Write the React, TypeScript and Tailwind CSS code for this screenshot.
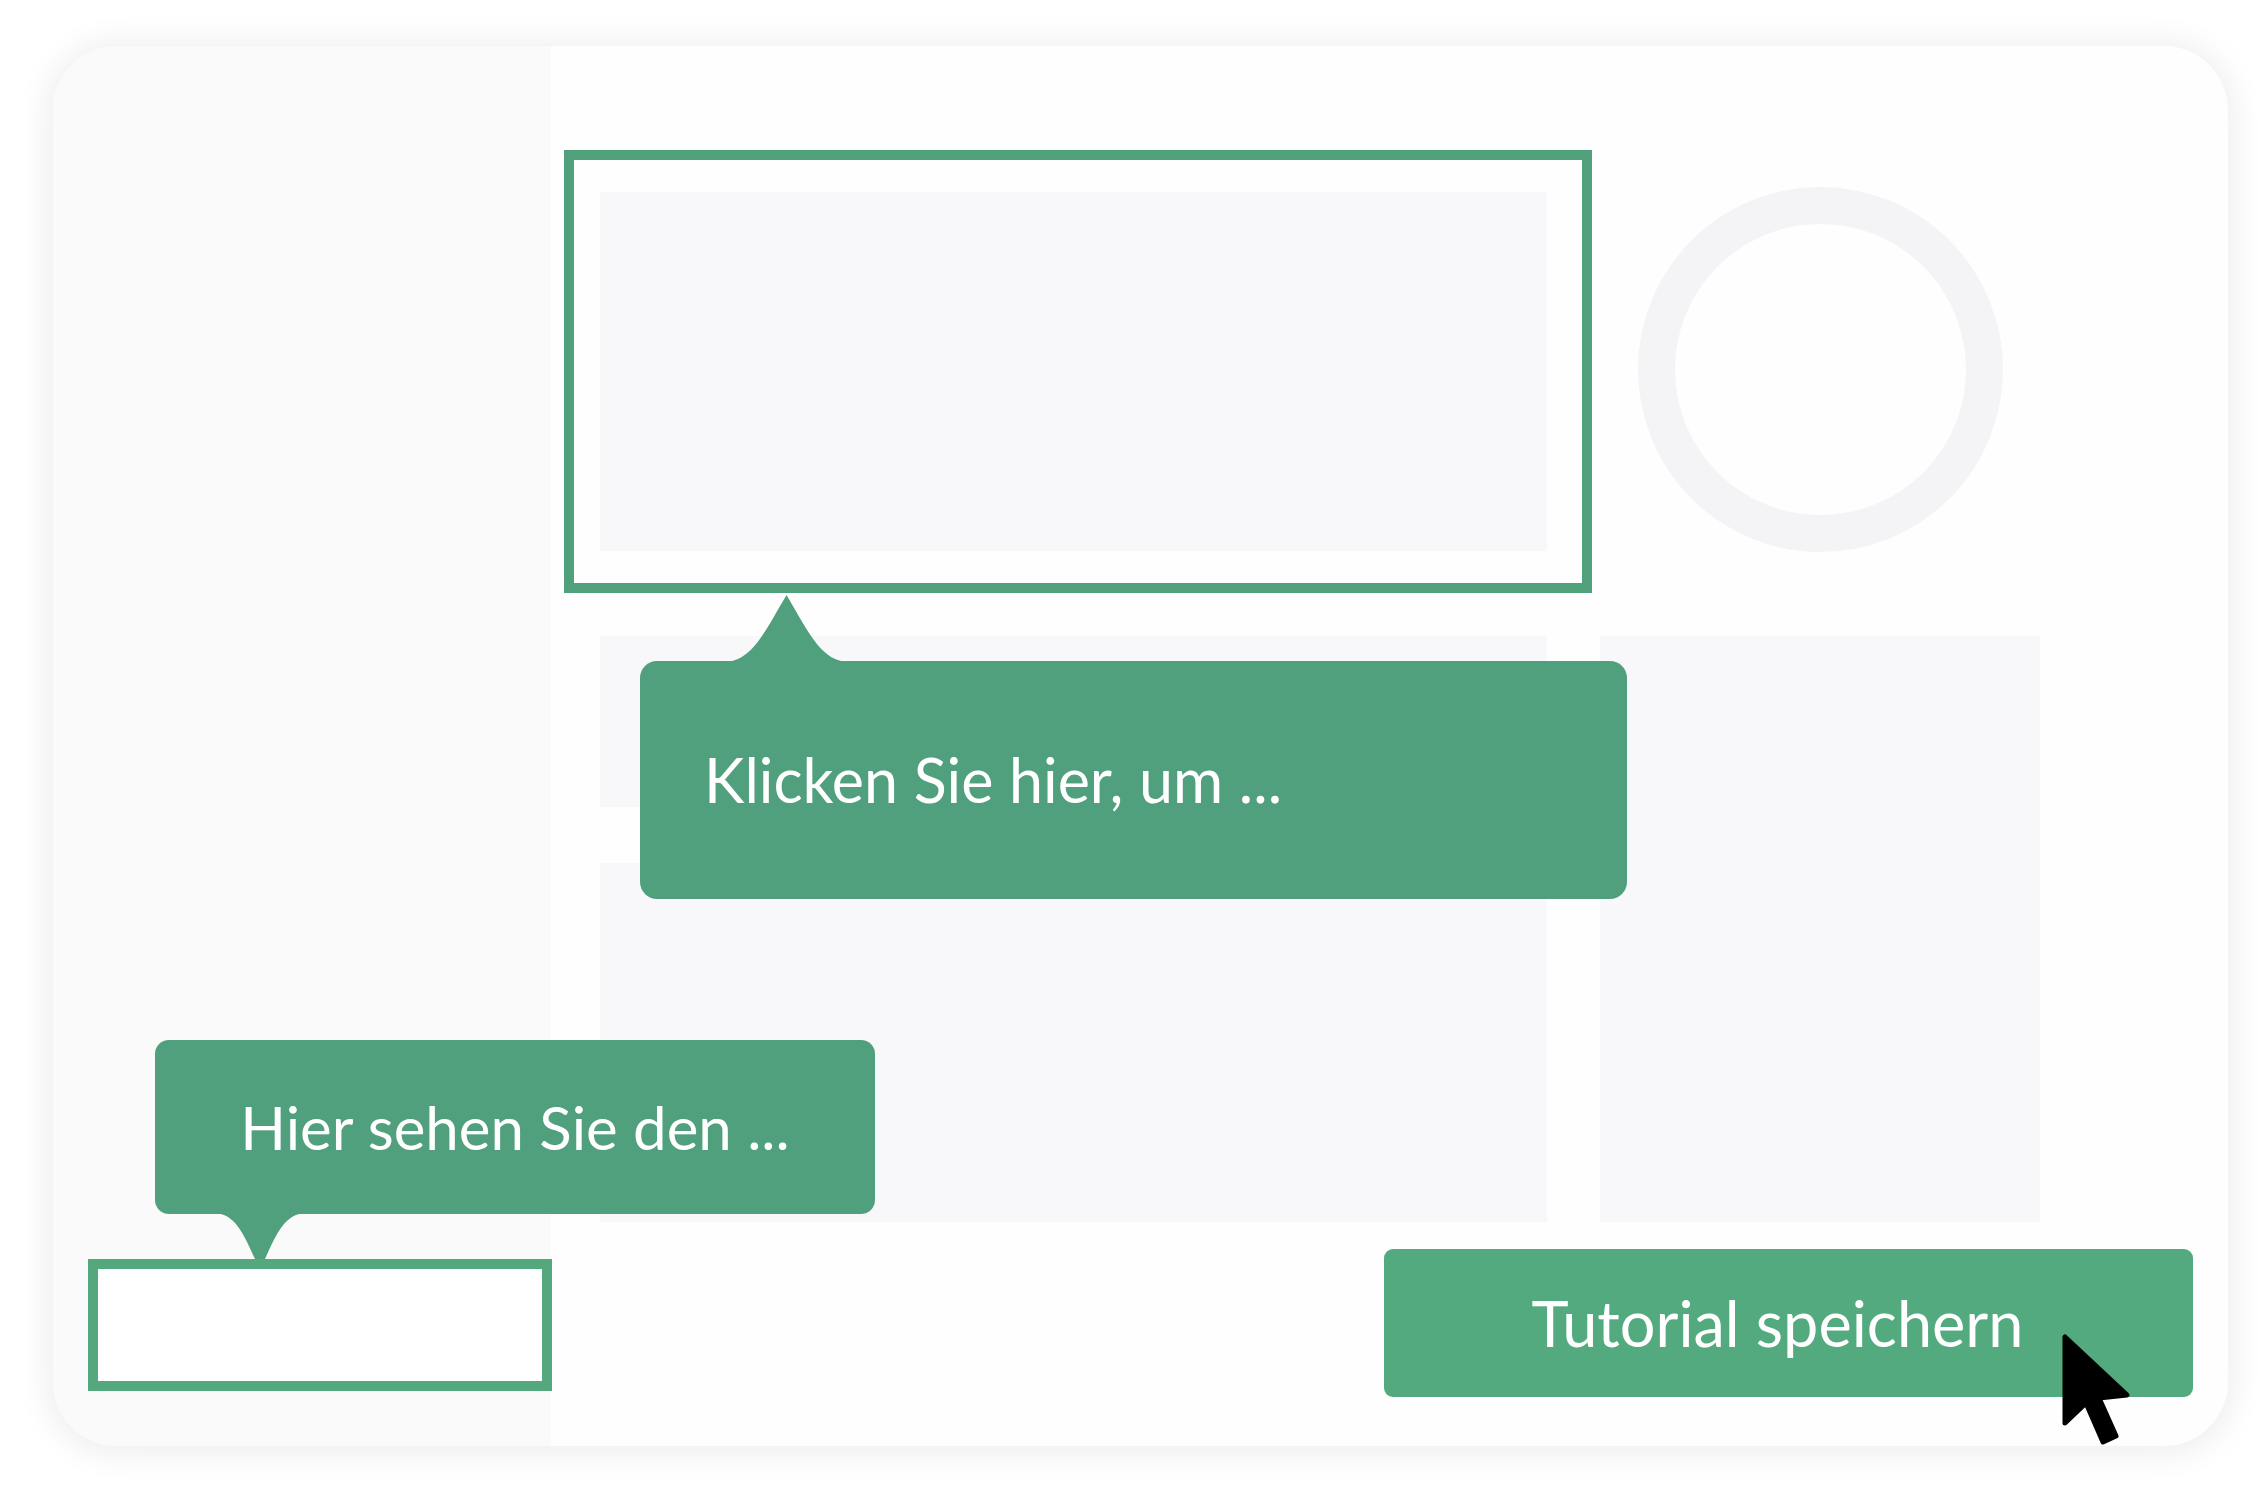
export default function App() {
  return (
    <div className="min-h-screen w-full bg-white pl-[53px] pt-[46px] font-['Lato',_'Open_Sans',_sans-serif]">
      {/* Card */}
      <div className="relative flex h-[1400px] w-[2175px] rounded-[64px] bg-[#fefefe] shadow-[0_2px_32px_6px_rgba(0,0,0,0.07)]">
        {/* Sidebar */}
        <div className="w-[498px] shrink-0 rounded-l-[64px] bg-[#fafafa]" />

        {/* Main area */}
        <div className="relative flex flex-1 flex-col pt-[146px]">
          <div className="grid grid-cols-[947px_440px] gap-x-[53px] pl-[49px]">
            <div className="h-[359px] bg-[#f8f8fa]" />
            <div className="flex h-[359px] items-center justify-center">
              <div className="mt-[-4px] h-[365px] w-[365px] shrink-0 rounded-full border-[37px] border-[#f4f4f6]" />
            </div>
            <div className="mt-[85px] flex flex-col gap-[56px]">
              <div className="h-[171px] bg-[#f8f8fa]" />
              <div className="h-[359px] bg-[#f8f8fa]" />
            </div>
            <div className="mt-[85px] bg-[#f8f8fa]" />
          </div>

          <div className="mt-[27px] flex justify-end pr-[35px]">
            <button className="flex h-[148px] w-[809px] items-center justify-center rounded-[9px] bg-[#52aa7e] pr-[22px] text-[63px] text-white">
              Tutorial speichern
            </button>
          </div>

          {/* Highlighted element */}
          <div className="absolute left-[13px] top-[104px] h-[443px] w-[1028px] border-[10px] border-[#4fa07b]" />

          {/* Tooltip 1 */}
          <div className="absolute left-[89px] top-[615px] flex h-[238px] w-[987px] items-center rounded-[17px] bg-[#51a07d] pl-[64px] text-[61px] text-white">
            <svg
              className="absolute left-[83px] top-[-66px]"
              width="127"
              height="67"
              viewBox="0 0 127 67"
            >
              <path d="M0 67 C 28 67 40 40 63.5 0 C 87 40 99 67 127 67 Z" fill="#51a07d" />
            </svg>
            Klicken Sie hier, um ...
          </div>
        </div>

        {/* Tooltip 2 */}
        <div className="absolute left-[102px] top-[994px] flex h-[174px] w-[720px] items-center justify-center rounded-[14px] bg-[#51a07d] text-[60px] text-white">
          Hier sehen Sie den ...
          <svg
            className="absolute left-[58px] top-[173px]"
            width="94"
            height="46"
            viewBox="0 0 94 46"
          >
            <path d="M0 0 C 22 0 30 20 42 46 L 52 46 C 64 20 72 0 94 0 Z" fill="#51a07d" />
          </svg>
        </div>

        {/* Highlighted sidebar element */}
        <div className="absolute left-[35px] top-[1213px] h-[132px] w-[464px] border-[10px] border-[#53a97d] bg-white" />

        {/* Mouse cursor */}
        <svg
          className="absolute left-[2009px] top-[1288px]"
          width="72"
          height="116"
          viewBox="-3 -3 72 116"
        >
          <path
            d="M0 0 L0 86 L21 66 L38 105 L51 99 L34 61 L62 58 Z"
            fill="#000"
            stroke="#000"
            strokeWidth="5"
            strokeLinejoin="round"
          />
        </svg>
      </div>
    </div>
  );
}
